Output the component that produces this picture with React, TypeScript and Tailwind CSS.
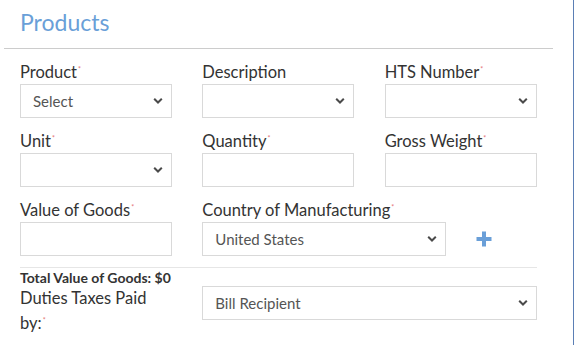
import React from 'react';

const font = { fontFamily: 'Lato, "Open Sans", sans-serif' };

const Req = () => <span className="relative -top-[6px] ml-[1px] inline-block text-[7px] leading-none text-[#e57373]">*</span>;

const Chevron = () => (
  <svg className="pointer-events-none absolute right-[9px] top-1/2 -translate-y-1/2" width="10" height="7" viewBox="0 0 10 7">
    <path d="M1.2 1.3 L5 5 L8.8 1.3" fill="none" stroke="#4a4a4a" strokeWidth="2" />
  </svg>
);

const Select: React.FC<{ value?: string; className?: string }> = ({ value = '', className = 'w-[152px]' }) => (
  <div className={`relative h-[34px] ${className}`}>
    <div className="flex h-full items-center border border-[#d9d9d9] bg-white pl-[12px] text-[15px] text-[#555]">
      {value}
    </div>
    <Chevron />
  </div>
);

const Input: React.FC = () => <div className="h-[34px] w-[152px] border border-[#d9d9d9] bg-white" />;

const Label: React.FC<{ text: string; req?: boolean }> = ({ text, req }) => (
  <div className="mb-[2px] h-[20px] text-[16.5px] leading-[20px] text-[#333]">
    {text}
    {req && <Req />}
  </div>
);

export default function App() {
  return (
    <div className="h-[345px] w-[582px] overflow-hidden bg-white" style={font}>
      <div className="h-full w-[574px] border-r border-[#5b7fb5]">
        <div className="mx-[4px] flex h-[49px] w-[549px] items-center border-b border-[#cccccc] pl-[16px] pb-[3px]">
          <h2 className="text-[23px] text-[#6a9fd8]">Products</h2>
        </div>
        <div className="w-[557px] px-[5px] pt-[13px]">
          <div className="grid grid-cols-3">
            <div className="px-[15px] pb-[13px]">
              <Label text="Product" req />
              <Select value="Select" />
            </div>
            <div className="px-[15px] pb-[13px]">
              <Label text="Description" />
              <Select />
            </div>
            <div className="px-[15px] pb-[13px]">
              <Label text="HTS Number" req />
              <Select />
            </div>
            <div className="px-[15px] pb-[13px]">
              <Label text="Unit" req />
              <Select />
            </div>
            <div className="px-[15px] pb-[13px]">
              <Label text="Quantity" req />
              <Input />
            </div>
            <div className="px-[15px] pb-[13px]">
              <Label text="Gross Weight" req />
              <Input />
            </div>
            <div className="px-[15px]">
              <Label text="Value of Goods" req />
              <Input />
            </div>
            <div className="col-span-2 px-[15px]">
              <Label text="Country of Manufacturing" req />
              <div className="flex items-center">
                <Select value="United States" className="w-[244px]" />
                <svg className="ml-[30px]" width="16" height="16" viewBox="0 0 16 16">
                  <path d="M8 0.5 V15.5 M0.5 8 H15.5" stroke="#6a9fd8" strokeWidth="4" />
                </svg>
              </div>
            </div>
          </div>
          <div className="mx-[15px] mt-[11px] border-t border-[#e6e6e6]" />
          <div className="px-[15px] pt-[1px] text-[14px] font-bold leading-[17px] text-[#333]">
            Total Value of Goods: $0
          </div>
          <div className="grid grid-cols-3">
            <div className="px-[15px] text-[16.5px] leading-[25px] text-[#333]">
              Duties Taxes Paid
              <br />
              <span className="whitespace-nowrap">
                by:
                <Req />
              </span>
            </div>
            <div className="col-span-2 px-[15px]">
              <Select value="Bill Recipient" className="w-[335px]" />
            </div>
          </div>
        </div>
      </div>
    </div>
  );
}
